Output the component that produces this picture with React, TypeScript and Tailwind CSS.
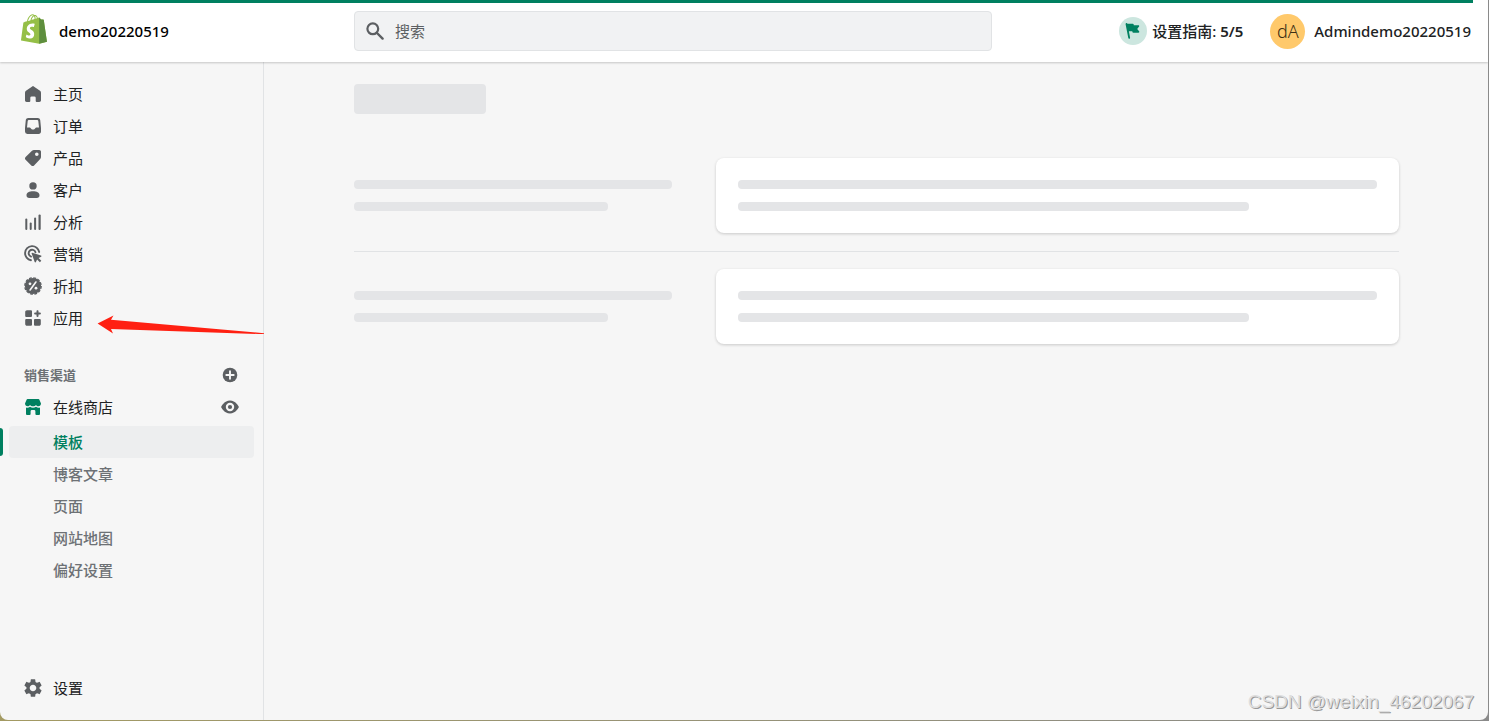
import React from 'react';
import { MdSettings } from 'react-icons/md';

type IconProps = { className?: string };

const Svg = ({ className = 'size-[18px]', children }: IconProps & { children: React.ReactNode }) => (
    <svg viewBox="0 0 18 18" fill="currentColor" className={`shrink-0 ${className}`} aria-hidden="true">
        {children}
    </svg>
);

const HomeIcon = () => (
    <Svg>
        <path d="M8.2 1.400a1.400 1.400 0 0 1 1.600 0l6.200 4.400c.6.400 1 1.100 1 1.900v7.600c0 .9-.7 1.700-1.700 1.700h-2.600a1 1 0 0 1-1-1v-3.200a1.400 1.400 0 0 0-1.400-1.400H7.700a1.400 1.400 0 0 0-1.400 1.400V16a1 1 0 0 1-1 1H2.700C1.700 17 1 16.200 1 15.300V7.700c0-.8.400-1.500 1-1.900z" />
    </Svg>
);

const OrdersIcon = () => (
    <Svg>
        <path
            fillRule="evenodd"
            d="M4.200 1h9.600c1.200 0 2.200.9 2.400 2.100L17 11v3.600c0 1.300-1 2.400-2.400 2.400H3.400A2.400 2.400 0 0 1 1 14.600V11l.8-7.900C2 1.900 3 1 4.200 1zm.6 2c-.6 0-1 .4-1.100 1L3 10.500h2.600c.5 0 .8.3 1.100.7.500.8 1.300 1.300 2.300 1.300s1.800-.5 2.300-1.300c.3-.4.6-.7 1.100-.7H15L14.300 4c-.1-.6-.5-1-1.100-1z"
        />
    </Svg>
);

const ProductsIcon = () => (
    <Svg>
        <path
            fillRule="evenodd"
            d="M10 1h5.200C16.200 1 17 1.800 17 2.800V8c0 .8-.3 1.500-.8 2l-6.100 6.400c-.8.800-2 .8-2.800 0L1.600 10.700c-.8-.8-.8-2 0-2.800L8 1.800c.5-.5 1.300-.8 2-.8zm2.800 6a1.800 1.800 0 1 0 0-3.600 1.800 1.800 0 0 0 0 3.600z"
        />
    </Svg>
);

const CustomersIcon = () => (
    <Svg>
        <circle cx="9" cy="4.900" r="3.700" />
        <path d="M2.500 14.200c0-2.600 2.800-4 6.500-4s6.500 1.400 6.500 4c0 1.700-1 2.800-2.700 2.800H5.200c-1.700 0-2.700-1.100-2.700-2.800z" />
    </Svg>
);

const AnalyticsIcon = () => (
    <Svg>
        <rect x="1.300" y="5.500" width="2" height="11.500" rx="1" />
        <rect x="5.700" y="9.500" width="2" height="7.500" rx="1" />
        <rect x="10.100" y="4.500" width="2" height="12.500" rx="1" />
        <rect x="14.500" y="1.500" width="2.200" height="15.500" rx="1" />
    </Svg>
);

const MarketingIcon = () => (
    <Svg>
        <g fill="none" stroke="currentColor" strokeWidth="1.900" strokeLinecap="round">
            <path d="M15.200 7A7.100 7.100 0 1 0 7 15.200" />
            <path d="M11.500 7.200a3.500 3.500 0 1 0-4.500 4.400" />
        </g>
        <path d="M8.200 7.700 17 10.600c.6.200.6.900.1 1.200l-2.500 1.300 2.700 2.700-1.400 1.500-2.800-2.800-1.200 2.500c-.3.600-1 .5-1.200-.1L7.600 8.400c-.1-.4.200-.8.600-.7z" />
    </Svg>
);

const DiscountsIcon = () => (
    <Svg>
        <circle cx="9" cy="9" r="8.100" />
        <circle cx="9" cy="9" r="8.200" fill="none" stroke="currentColor" strokeWidth="1.300" strokeDasharray="2.800 1.494" />
        <path d="m6.100 13 5.800-8" stroke="#f6f6f6" strokeWidth="1.600" strokeLinecap="round" />
        <circle cx="6" cy="6.800" r="1.400" fill="#f6f6f6" />
        <circle cx="12" cy="11.200" r="1.400" fill="#f6f6f6" />
    </Svg>
);

const AppsIcon = () => (
    <Svg>
        <path d="M3 1.200h4a1 1 0 0 1 1 1V7a1 1 0 0 1-1 1H2.200a1 1 0 0 1-1-1V3c0-1 .8-1.800 1.800-1.800zM2.200 10H7a1 1 0 0 1 1 1v4.800a1 1 0 0 1-1 1H3c-1 0-1.800-.8-1.800-1.800v-4a1 1 0 0 1 1-1zM11 10h4.800a1 1 0 0 1 1 1v4c0 1-.8 1.800-1.800 1.800h-4a1 1 0 0 1-1-1V11a1 1 0 0 1 1-1z" />
        <path d="M13.500 1.200c.6 0 1 .4 1 1v1.400h1.400a1 1 0 0 1 0 2h-1.400V7a1 1 0 0 1-2 0V5.600h-1.400a1 1 0 0 1 0-2h1.400V2.200c0-.6.4-1 1-1z" />
    </Svg>
);

const StoreIcon = () => (
    <Svg>
        <path d="M2.600 1.800C2.700 1.300 3.100 1 3.600 1h10.800c.5 0 .9.300 1 .8L17 5.600c0 1.600-1.100 2.700-2.600 2.700-1 0-1.900-.5-2.400-1.300-.6.800-1.600 1.300-3 1.300S6.600 7.800 6 7C5.500 7.800 4.600 8.300 3.600 8.300 2.100 8.300 1 7.200 1 5.600z" />
        <path d="M2 9.600c1.500.4 3 .1 4-.8 1.700 1.300 4.300 1.300 6 0 1 .9 2.500 1.200 4 .8V16a1 1 0 0 1-1 1h-2.600a1 1 0 0 1-1-1v-2.600a1.300 1.300 0 0 0-1.300-1.300H7.900a1.300 1.300 0 0 0-1.300 1.300V16a1 1 0 0 1-1 1H3a1 1 0 0 1-1-1z" />
    </Svg>
);

const PlusCircleIcon = () => (
    <Svg>
        <circle cx="9" cy="9" r="7.300" />
        <path d="M9 5.300v7.400M5.300 9h7.400" stroke="#f6f6f6" strokeWidth="1.900" strokeLinecap="round" />
    </Svg>
);

const EyeIcon = () => (
    <Svg>
        <path
            fillRule="evenodd"
            d="M17.700 8.500C17.500 8.200 14.700 2.500 9 2.500S.5 8.200.3 8.500a1 1 0 0 0 0 1C.5 9.800 3.300 15.500 9 15.500s8.500-5.700 8.700-6a1 1 0 0 0 0-1zM9 13.200a4.200 4.200 0 1 1 0-8.400 4.200 4.200 0 0 1 0 8.400z"
        />
        <circle cx="9" cy="9" r="2.100" />
    </Svg>
);

const SearchIcon = () => (
    <Svg className="size-[18px] text-[#5c5f62]">
        <circle cx="6.800" cy="6.800" r="5.400" fill="none" stroke="currentColor" strokeWidth="2.200" />
        <path d="m11 11 5.600 5.600" stroke="currentColor" strokeWidth="2.400" strokeLinecap="round" />
    </Svg>
);

const FlagIcon = () => (
    <Svg>
        <path d="M2.300 1.100a.9.900 0 0 1 1.100.7h5.400c.5 0 .8.300.9.800l.1.700h4.600c.7 0 1.100.7.700 1.300l-1.900 2.300 1.900 2.300c.5.600.1 1.500-.7 1.500H9.300c-.5 0-.8-.3-.9-.8l-.1-.6H4.900l1.200 6.400a.9.900 0 0 1-1.800.3L1.600 2.200c-.1-.5.200-1 .7-1.100z" />
    </Svg>
);

const ShopifyLogo = () => (
    <svg viewBox="0 0 109.500 124.500" className="h-[30px] w-[26px] shrink-0" aria-hidden="true">
        <path
            fill="#95BF47"
            d="M95.900 23.900c-.1-.6-.6-1-1.100-1s-9.300-.2-9.300-.2-7.400-7.200-8.100-7.900c-.7-.7-2.200-.5-2.700-.3 0 0-1.400.4-3.700 1.100-.4-1.300-1-2.800-1.800-4.400-2.600-5-6.500-7.700-11.100-7.700-.3 0-.6 0-1 .1-.1-.2-.3-.3-.4-.5-2-2.200-4.600-3.200-7.700-3.100-6 .2-12 4.500-16.800 12.200-3.400 5.400-6 12.200-6.700 17.500-6.900 2.100-11.700 3.600-11.800 3.700-3.500 1.100-3.600 1.200-4 4.500-.3 2.500-9.500 73-9.500 73l76.400 13.200 33.100-8.200S96 24.500 95.900 23.900zM67.200 16.800c-1.800.5-3.800 1.200-5.900 1.800 0-3-.4-7.300-1.800-10.900 4.500.9 6.700 6 7.700 9.100zm-10 3.100c-4 1.200-8.400 2.600-12.800 3.900 1.200-4.700 3.600-9.400 6.400-12.500 1.100-1.100 2.600-2.400 4.300-3.200 1.800 3.500 2.200 8.400 2.100 11.800zM49.100 4c1.400 0 2.600.3 3.600.9-1.600.8-3.200 2.100-4.700 3.600-3.800 4.100-6.700 10.500-7.900 16.600-3.600 1.100-7.200 2.200-10.500 3.200C31.700 18.800 39.800 4.300 49.100 4z"
        />
        <path
            fill="#5E8E3E"
            d="M94.800 22.900c-.5 0-9.300-.2-9.300-.2s-7.400-7.200-8.100-7.900c-.3-.3-.6-.4-1-.5V124l33.100-8.200S96 24.500 95.900 23.800c-.1-.5-.6-.9-1.100-.9z"
        />
        <path
            fill="#FFF"
            d="M58 39.900l-3.800 14.400s-4.300-2-9.400-1.600c-7.500.5-7.500 5.200-7.500 6.400.4 6.400 17.300 7.800 18.300 22.900.7 11.900-6.300 20-16.400 20.600-12.200.8-18.900-6.400-18.900-6.400l2.600-11s6.700 5.100 12.100 4.700c3.500-.2 4.800-3.100 4.700-5.100-.5-8.400-14.300-7.900-15.200-21.700-.7-11.600 6.900-23.400 23.700-24.400 6.500-.2 9.800 1.200 9.800 1.200z"
        />
    </svg>
);

const mainNav = [
    { label: '主页', Icon: HomeIcon },
    { label: '订单', Icon: OrdersIcon },
    { label: '产品', Icon: ProductsIcon },
    { label: '客户', Icon: CustomersIcon },
    { label: '分析', Icon: AnalyticsIcon },
    { label: '营销', Icon: MarketingIcon },
    { label: '折扣', Icon: DiscountsIcon },
    { label: '应用', Icon: AppsIcon },
];

const storeNav = ['模板', '博客文章', '页面', '网站地图', '偏好设置'];

const Header = () => (
    <header className="relative z-10 flex h-[62px] shrink-0 items-center bg-white shadow-[0_1px_2px_rgba(0,0,0,0.2)]">
        {/* Page loading bar */}
        <div className="absolute top-0 left-0 h-[3px] w-[99%] bg-[#008060]" />

        <a href="#" className="flex w-[264px] shrink-0 items-center gap-3 pb-1 pl-[21px] text-black">
            <ShopifyLogo />
            <span className="pt-1 font-medium">demo20220519</span>
        </a>

        <div className="flex flex-1 items-center justify-between gap-8 pr-[17px] pl-[90px]">
            <label className="flex h-10 max-w-[638px] flex-1 items-center gap-[11px] rounded border border-[#e1e3e5] bg-[#f1f2f3] px-[11px]">
                <SearchIcon />
                <input
                    type="search"
                    placeholder="搜索"
                    aria-label="搜索"
                    className="w-full bg-transparent outline-none placeholder:text-[#5c5f62]"
                />
            </label>

            <div className="flex shrink-0 items-center gap-[27px]">
                <button className="flex items-center gap-[5px] font-medium">
                    <span className="flex size-7 items-center justify-center rounded-full bg-[#cce6df] text-[#008060]">
                        <FlagIcon />
                    </span>
                    <span>
                        设置指南: <span className="font-semibold">5/5</span>
                    </span>
                </button>
                <button className="flex items-center gap-[9px] font-medium">
                    <span className="flex size-[35px] items-center justify-center rounded-full bg-[#ffc96b] text-lg font-light text-[#3d2f14]">
                        dA
                    </span>
                    Admindemo20220519
                </button>
            </div>
        </div>
    </header>
);

const Sidebar = () => (
    <nav className="relative flex w-[264px] shrink-0 flex-col border-r border-[#e1e3e5] pt-4 pb-4">
        <ul>
            {mainNav.map(({ label, Icon }) => (
                <li key={label}>
                    <a href="#" className="flex h-8 items-center gap-[11px] pl-6 text-[#5c5f62]">
                        <Icon />
                        <span className="text-[#202223]">{label}</span>
                    </a>
                </li>
            ))}
        </ul>

        <div className="mt-[25px] flex h-8 items-center justify-between pr-6 pl-6 text-[#5c5f62]">
            <h2 className="text-[13px] font-semibold text-[#6d7175]">销售渠道</h2>
            <button aria-label="添加销售渠道">
                <PlusCircleIcon />
            </button>
        </div>
        <div className="flex h-8 items-center justify-between pr-6 pl-6">
            <a href="#" className="flex items-center gap-[11px] text-[#008060]">
                <StoreIcon />
                <span className="text-[#202223]">在线商店</span>
            </a>
            <button aria-label="查看在线商店" className="text-[#5c5f62]">
                <EyeIcon />
            </button>
        </div>
        <ul className="mt-[3px]">
            {storeNav.map((label, i) => (
                <li key={label} className="relative pr-[9px] pl-[9px]">
                    {i === 0 && <span className="absolute top-0.5 left-0 h-7 w-[3px] rounded-r bg-[#008060]" />}
                    <a
                        href="#"
                        className={`flex h-8 items-center rounded pl-11 font-medium ${
                            i === 0 ? 'bg-[#edeeef] text-[#008060]' : 'text-[#6d7175]'
                        }`}
                    >
                        {label}
                    </a>
                </li>
            ))}
        </ul>

        <a href="#" className="mt-auto flex h-8 items-center gap-[9px] pl-[22px] text-[#5c5f62]">
            <MdSettings className="size-[22px]" aria-hidden="true" />
            <span className="text-[#202223]">设置</span>
        </a>

        {/* Arrow pointing at the apps entry */}
        <svg viewBox="0 0 167 20" className="absolute top-[252px] left-[97px] h-5 w-[167px]" aria-hidden="true">
            <path fill="#ff2012" d="M.6 9.500 16.500 1.500 14 5.800 167 19.200v1L14 15l2 4.500z" />
        </svg>
    </nav>
);

const SkeletonLines = () => (
    <div className="flex flex-col gap-[13px]">
        <div className="h-[9px] rounded bg-[#e4e5e7]" />
        <div className="h-[9px] w-4/5 rounded bg-[#e4e5e7]" />
    </div>
);

const SkeletonSection = () => (
    <section className="grid grid-cols-[7fr_15fr] gap-11">
        <div className="pt-[22px]">
            <SkeletonLines />
        </div>
        <div className="rounded-lg bg-white p-[22px] shadow-[0_1px_3px_rgba(23,24,24,0.2)]">
            <SkeletonLines />
        </div>
    </section>
);

export default function App() {
    return (
        <div className="flex min-h-screen flex-col bg-linear-to-r from-[#a39a62] to-[#8a8a8a] pr-px pb-px font-['Noto_Sans','Noto_Sans_CJK_SC',sans-serif] text-[15px] leading-5 text-[#202223]">
            <div className="relative flex flex-1 flex-col overflow-hidden rounded-b-lg bg-[#f6f6f6]">
                <Header />
                <div className="flex flex-1">
                    <Sidebar />
                    <main className="flex-1 px-11 pt-[22px]">
                        <div className="mx-auto max-w-[1045px]">
                            <div className="mb-11 h-[30px] w-[132px] rounded-sm bg-[#e4e5e7]" />
                            <SkeletonSection />
                            <hr className="mt-[18px] mb-[17px] border-[#e1e3e5]" />
                            <SkeletonSection />
                        </div>
                    </main>
                </div>
                <p className="absolute right-[14px] bottom-2 font-['Liberation_Sans',sans-serif] text-[19px] text-[#dedede] [text-shadow:1px_1px_0_#999]">
                    CSDN @weixin_46202067
                </p>
            </div>
        </div>
    );
}
